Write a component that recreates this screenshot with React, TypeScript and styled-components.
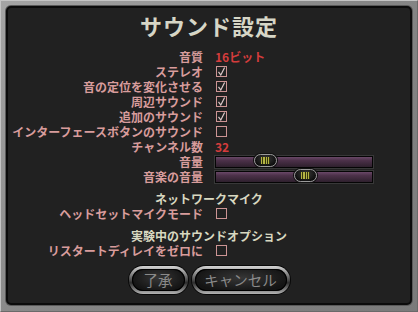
import React from 'react';
import styled, { createGlobalStyle } from 'styled-components';

type OptionRow =
   | { kind: 'text'; label: string; value: string }
   | { kind: 'check'; label: string; checked: boolean }
   | { kind: 'slider'; label: string; value: number };

const mainRows: OptionRow[] = [
   { kind: 'text', label: '音質', value: '16ビット' },
   { kind: 'check', label: 'ステレオ', checked: true },
   { kind: 'check', label: '音の定位を変化させる', checked: true },
   { kind: 'check', label: '周辺サウンド', checked: true },
   { kind: 'check', label: '追加のサウンド', checked: true },
   { kind: 'check', label: 'インターフェースボタンのサウンド', checked: false },
   { kind: 'text', label: 'チャンネル数', value: '32' },
   { kind: 'slider', label: '音量', value: 0.286 },
   { kind: 'slider', label: '音楽の音量', value: 0.586 },
];

const sections: { title: string; rows: OptionRow[] }[] = [
   {
      title: 'ネットワークマイク',
      rows: [{ kind: 'check', label: 'ヘッドセットマイクモード', checked: false }],
   },
   {
      title: '実験中のサウンドオプション',
      rows: [{ kind: 'check', label: 'リスタートディレイをゼロに', checked: false }],
   },
];

function CheckBox({ checked }: { checked: boolean }) {
   return (
      <Box>
         {checked && (
            <svg width="9" height="9" viewBox="0 0 9 9">
               <path d="M1.5 4.8 L3.8 8 L7.6 0.6" fill="none" stroke="#dcc8c8" strokeWidth="1.2" />
            </svg>
         )}
      </Box>
   );
}

function Slider({ value }: { value: number }) {
   return (
      <Track>
         <Knob style={{ left: `calc(${value} * (100% - 23px))` }} />
      </Track>
   );
}

function Rows({ rows, top = 0 }: { rows: OptionRow[]; top?: number }) {
   return (
      <OptionGrid $top={top}>
         {rows.map((row) => (
            <React.Fragment key={row.label}>
               <Label>{row.label}</Label>
               {row.kind === 'text' && <Value>{row.value}</Value>}
               {row.kind === 'check' && <CheckBox checked={row.checked} />}
               {row.kind === 'slider' && <Slider value={row.value} />}
            </React.Fragment>
         ))}
      </OptionGrid>
   );
}

export default function App() {
   return (
      <>
         <GlobalStyle />
         <Frame>
            <Panel>
               <Title>サウンド設定</Title>
               <Rows rows={mainRows} top={11} />
               {sections.map((section) => (
                  <Section key={section.title}>
                     <SectionTitle>{section.title}</SectionTitle>
                     <Rows rows={section.rows} />
                  </Section>
               ))}
               <ButtonBar>
                  <PillButton $width={59}>了承</PillButton>
                  <PillButton $width={98}>キャンセル</PillButton>
               </ButtonBar>
            </Panel>
         </Frame>
      </>
   );
}

const GlobalStyle = createGlobalStyle`
   html, body {
      margin: 0;
      padding: 0;
      background: #202020;
   }
   body {
      font-family: "Noto Sans CJK JP", "Noto Sans", sans-serif;
   }
`;

const Frame = styled.div`
   box-sizing: border-box;
   width: 418px;
   height: 312px;
   padding: 5px 5px 6px 5px;
   background: linear-gradient(135deg, #a4a4a4 0%, #868686 50%, #7a7a7a 100%);
   border: 1px solid;
   border-color: #c4c4c4 #6a6a6a #6a6a6a #c4c4c4;
   display: flex;
`;

const Panel = styled.div`
   flex: 1;
   display: flex;
   flex-direction: column;
   padding-top: 4px;
   background: #212121;
   border: 2px solid #0b0b0b;
   border-radius: 5px;
   box-shadow: 0 0 0 1px #5a5a5a;
`;

const Title = styled.div`
   text-align: center;
   font-size: 22px;
   font-weight: 700;
   letter-spacing: 1px;
   line-height: 26px;
   color: #d6d6c6;
`;

const OptionGrid = styled.div<{ $top: number }>`
   display: grid;
   grid-template-columns: 195px 158px;
   grid-auto-rows: 15px;
   column-gap: 12px;
   align-items: center;
   margin-top: ${(p) => p.$top}px;
`;

const Label = styled.div`
   text-align: right;
   font-size: 12px;
   font-weight: 700;
   line-height: 15px;
   color: #d89c9c;
   white-space: nowrap;
`;

const Value = styled.div`
   font-size: 12px;
   font-weight: 700;
   line-height: 15px;
   color: #d43c3c;
`;

const Box = styled.span`
   box-sizing: border-box;
   width: 11px;
   height: 11px;
   margin-left: 1px;
   border: 1px solid #cc9494;
   display: flex;
   align-items: center;
   justify-content: center;
`;

const Track = styled.div`
   position: relative;
   box-sizing: border-box;
   height: 12px;
   border: 1px solid #050505;
   background: linear-gradient(180deg, #6a4868 0%, #4c3149 35%, #2e202d 100%);
   box-shadow: 0 0 0 1px #383838;
`;

const Knob = styled.div`
   position: absolute;
   top: -3px;
   box-sizing: border-box;
   width: 23px;
   height: 13px;
   border-radius: 7px;
   border: 1.5px solid #9a9a9a;
   background: radial-gradient(ellipse at 50% 35%, #3c3c3c, #0e0e0e 75%);
   box-shadow: 0 0 0 1px #111;
   display: flex;
   align-items: center;
   justify-content: center;

   &::after {
      content: '';
      width: 9px;
      height: 7px;
      background: repeating-linear-gradient(90deg, #b4b444 0 1.4px, #34340e 1.4px 2.3px);
   }
`;

const Section = styled.div`
   margin-top: 7px;
`;

const SectionTitle = styled.div`
   text-align: center;
   font-size: 12px;
   font-weight: 700;
   line-height: 15px;
   color: #d8d8c0;
`;

const ButtonBar = styled.div`
   display: flex;
   justify-content: center;
   gap: 4px;
   margin-top: 8px;
`;

const PillButton = styled.button<{ $width: number }>`
   box-sizing: border-box;
   width: ${(p) => p.$width}px;
   height: 28px;
   padding: 0;
   border-radius: 14px;
   border: 3px solid transparent;
   background:
      radial-gradient(ellipse at 50% 40%, #363636, #131313 75%) padding-box,
      linear-gradient(180deg, #d4d4d4 0%, #6a6a6a 40%, #2c2c2c 60%, #b4b4b4 100%) border-box;
   box-shadow: 0 0 0 1px #080808, inset 0 0 0 1px #000;
   font-family: "Noto Sans CJK JP", "Noto Sans", sans-serif;
   font-size: 14.5px;
   line-height: 20px;
   color: #8a8a8a;
`;
